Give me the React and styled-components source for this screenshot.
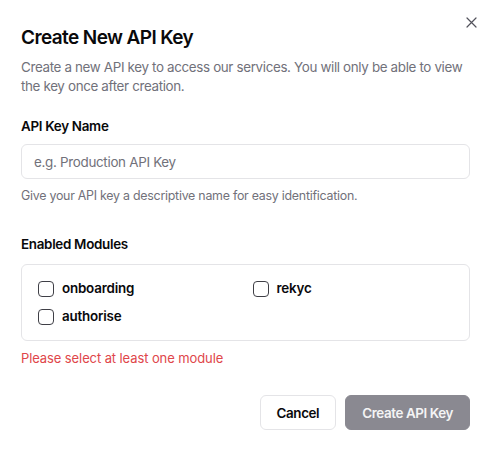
import React from 'react';
import styled, { createGlobalStyle } from 'styled-components';

const GlobalStyle = createGlobalStyle`
  * { box-sizing: border-box; }
  body {
    margin: 0;
    background: #ffffff;
    font-family: Inter, "Liberation Sans", sans-serif;
    color: #09090b;
  }
`;

const Dialog = styled.div`
  position: relative;
  width: 489px;
  height: 449px;
  padding: 24px 19px 20px 21px;
  display: flex;
  flex-direction: column;
`;

const Close = styled.button`
  position: absolute;
  top: 14px;
  right: 10px;
  width: 16px;
  height: 16px;
  padding: 0;
  border: none;
  background: none;
  color: #52525b;
  display: flex;
  align-items: center;
  justify-content: center;
`;

const Title = styled.h2`
  margin: 0;
  font-size: 19px;
  line-height: 28px;
  font-weight: 600;
  letter-spacing: -0.6px;
`;

const Description = styled.p`
  margin: 6px 0 0;
  font-size: 13.4px;
  line-height: 19px;
  letter-spacing: -0.35px;
  color: #71717a;
`;

const Field = styled.div`
  margin-top: ${p => p.$top}px;
  display: flex;
  flex-direction: column;
`;

const Label = styled.label`
  font-size: 13.4px;
  line-height: 20px;
  font-weight: 600;
  letter-spacing: -0.3px;
`;

const Input = styled.input`
  margin-top: 8px;
  height: 35px;
  border: 1px solid #e4e4e7;
  border-radius: 6px;
  padding: 0 12px;
  font: inherit;
  font-size: 13.4px;
  letter-spacing: -0.3px;
  outline: none;
  &::placeholder { color: #71717a; }
`;

const Hint = styled.p`
  margin: 8px 0 0;
  font-size: 12.4px;
  line-height: 18px;
  letter-spacing: -0.25px;
  color: #71717a;
`;

const ModuleBox = styled.div`
  margin-top: 10px;
  border: 1px solid #e4e4e7;
  border-radius: 6px;
  padding: 15px 16px 15px;
  display: grid;
  grid-template-columns: 1fr 1fr;
  column-gap: 14px;
  row-gap: 11px;
`;

const Option = styled.label`
  display: flex;
  align-items: center;
  gap: 8px;
  font-size: 13.4px;
  line-height: 17px;
  font-weight: 600;
  letter-spacing: -0.2px;
`;

const Box = styled.span`
  width: 16px;
  height: 16px;
  border: 1.5px solid #3f3f46;
  border-radius: 4px;
`;

const Error = styled.p`
  margin: 8px 0 0;
  font-size: 13px;
  line-height: 18px;
  letter-spacing: -0.1px;
  color: #e0464a;
`;

const Footer = styled.div`
  margin-top: 28px;
  display: flex;
  justify-content: flex-end;
  gap: 9px;
`;

const Button = styled.button`
  height: 35px;
  padding: 0 16px;
  border-radius: 6px;
  font: inherit;
  font-size: 13.4px;
  font-weight: 600;
  letter-spacing: -0.4px;
  border: 1px solid ${p => (p.$primary ? '#8a8991' : '#e4e4e7')};
  background: ${p => (p.$primary ? '#8a8991' : '#ffffff')};
  color: ${p => (p.$primary ? '#f4f4f5' : '#09090b')};
`;

const modules = ['onboarding', 'rekyc', 'authorise'];

export default function App() {
  return (
    <>
      <GlobalStyle />
      <Dialog>
        <Close aria-label="Close">
          <svg width="11" height="11" viewBox="0 0 11 11" fill="none" stroke="currentColor" strokeWidth="1.2" strokeLinecap="round">
            <path d="M1 1l9 9M10 1l-9 9" />
          </svg>
        </Close>
        <Title>Create New API Key</Title>
        <Description>
          Create a new API key to access our services. You will only be able to view the key once after creation.
        </Description>
        <Field $top={20}>
          <Label>API Key Name</Label>
          <Input placeholder="e.g. Production API Key" />
          <Hint>Give your API key a descriptive name for easy identification.</Hint>
        </Field>
        <Field $top={29}>
          <Label>Enabled Modules</Label>
          <ModuleBox>
            {modules.map(m => (
              <Option key={m}>
                <Box />
                {m}
              </Option>
            ))}
          </ModuleBox>
          <Error>Please select at least one module</Error>
        </Field>
        <Footer>
          <Button>Cancel</Button>
          <Button $primary>Create API Key</Button>
        </Footer>
      </Dialog>
    </>
  );
}
